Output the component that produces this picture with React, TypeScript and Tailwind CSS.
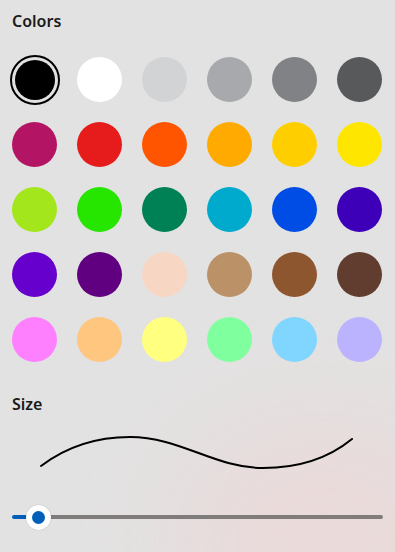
const colors = [
  "#000000", "#ffffff", "#d1d3d4", "#a7a9ac", "#808285", "#58595b",
  "#b31564", "#e61b1b", "#ff5500", "#ffaa00", "#ffce00", "#ffe600",
  "#a2e61b", "#26e600", "#008055", "#00aacc", "#004de6", "#3d00b8",
  "#6600cc", "#600080", "#f7d7c4", "#bb9167", "#8e562e", "#613d30",
  "#ff80ff", "#ffc680", "#ffff80", "#80ff9e", "#80d6ff", "#bcb3ff",
]

const Swatch = ({ color, selected }: { color: string; selected: boolean }) => {
  if (selected) {
    return (
      <div className="flex h-[45px] w-[45px] items-center justify-center">
        <div className="flex h-[50px] w-[50px] shrink-0 items-center justify-center rounded-full border-2 border-black">
          <div className="h-[40px] w-[40px] rounded-full" style={{ backgroundColor: color }} />
        </div>
      </div>
    )
  }
  return <div className="h-[45px] w-[45px] rounded-full" style={{ backgroundColor: color }} />
}

export default function App() {
  return (
    <div
      className="relative h-[552px] w-[395px] overflow-hidden bg-[#e2e2e2] text-[#1a1a1a]"
      style={{ fontFamily: '"Noto Sans", "Open Sans", sans-serif' }}
    >
      <div className="pointer-events-none absolute -bottom-[110px] -right-[80px] h-[240px] w-[300px] rounded-full bg-[#ecd8d8] opacity-90 blur-3xl" />
      <div className="relative flex flex-col px-3">
        <h2 className="mt-[10px] text-[16px] font-semibold leading-[22px]">Colors</h2>
        <div className="mt-[25px] grid grid-cols-[repeat(6,45px)] gap-x-[20px] gap-y-[20px]">
          {colors.map((c, i) => (
            <Swatch key={c} color={c} selected={i === 0} />
          ))}
        </div>
        <h2 className="mt-[31px] text-[16px] font-semibold leading-[22px]">Size</h2>
        <svg className="mt-[12px]" width="371" height="50" viewBox="12 425 371 50">
          <path
            d="M41 464 C 70 442, 100 435, 130 435 C 180 435, 215 466, 263 466 C 300 466, 330 455, 352 437"
            fill="none"
            stroke="#000"
            strokeWidth="2"
            strokeLinecap="round"
          />
        </svg>
        <div className="relative mt-[28px] flex h-[24px] items-center">
          <div className="h-[4px] w-[27px] rounded-l-full bg-[#005fb8]" />
          <div className="h-[4px] flex-1 rounded-r-full bg-[#807c7c]" />
          <div className="absolute left-[14px] top-0 flex h-[25px] w-[25px] items-center justify-center rounded-full bg-white shadow-[0_0_1px_rgba(0,0,0,0.3)]">
            <div className="h-[13px] w-[13px] rounded-full bg-[#005fb8]" />
          </div>
        </div>
      </div>
    </div>
  )
}
